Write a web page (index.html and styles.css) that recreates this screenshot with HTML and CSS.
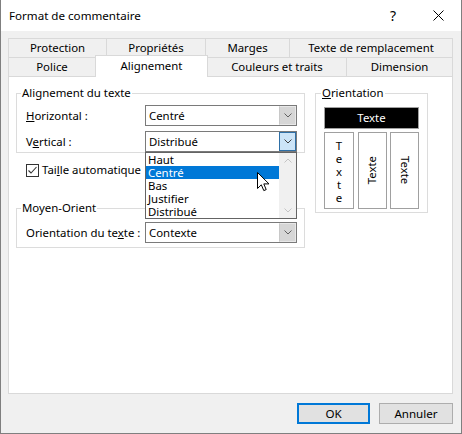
FILE: index.html
```html
<!DOCTYPE html>
<html lang="fr">
<head>
<meta charset="utf-8">
<title>Format de commentaire</title>
<link rel="stylesheet" href="styles.css">
</head>
<body>
<div class="dialog">
  <div class="titlebar">
    <span class="title">Format de commentaire</span>
    <span class="help">?</span>
    <span class="close"><svg width="11" height="11" viewBox="0 0 11 11"><path d="M0.5 0.5L10.5 10.5M10.5 0.5L0.5 10.5" stroke="#000" stroke-width="1"/></svg></span>
  </div>
  <div class="body">
    <div class="tabrow">
      <div class="tab t1">Protection</div>
      <div class="tab t2">Propriétés</div>
      <div class="tab t3">Marges</div>
      <div class="tab t4 last">Texte de remplacement</div>
    </div>
    <div class="tabrow">
      <div class="tab t5">Police</div>
      <div class="tab t6 selected">Alignement</div>
      <div class="tab t7">Couleurs et traits</div>
      <div class="tab t8 last">Dimension</div>
    </div>
    <div class="pane">
      <div class="leftcol">
        <fieldset class="group g1">
          <legend>Alignement du texte</legend>
          <div class="row">
            <span class="label"><u>H</u>orizontal :</span>
            <div class="combo">
              <span class="val">Centré</span>
              <span class="cbtn"><svg width="8" height="5" viewBox="0 0 8 5"><path d="M0.5 0.5L4 4L7.5 0.5" fill="none" stroke="#606060"/></svg></span>
            </div>
          </div>
          <div class="row row2">
            <span class="label">V<u>e</u>rtical :</span>
            <div class="combo-wrap">
              <div class="combo open">
                <span class="val">Distribué</span>
                <span class="cbtn"><svg width="8" height="5" viewBox="0 0 8 5"><path d="M0.5 0.5L4 4L7.5 0.5" fill="none" stroke="#404040"/></svg></span>
              </div>
              <div class="dropdown">
                <div class="items">
                  <div class="item">Haut</div>
                  <div class="item sel">Centré</div>
                  <div class="item">Bas</div>
                  <div class="item">Justifier</div>
                  <div class="item">Distribué</div>
                </div>
                <div class="scroll">
                  <svg width="8" height="5" viewBox="0 0 8 5"><path d="M0.5 4.5L4 1L7.5 4.5" fill="none" stroke="#c4c4c4"/></svg>
                  <svg width="8" height="5" viewBox="0 0 8 5"><path d="M0.5 0.5L4 4L7.5 0.5" fill="none" stroke="#c4c4c4"/></svg>
                </div>
                <svg class="cursor" width="13" height="20" viewBox="0 0 13 20"><path d="M0.5 0.5V16.5L4.3 12.8L6.8 18.6L9.2 17.6L6.8 11.9H12L0.5 0.5Z" fill="#fff" stroke="#000" stroke-width="1" stroke-linejoin="miter"/></svg>
              </div>
            </div>
          </div>
        </fieldset>
        <div class="check">
          <span class="box"><svg width="11" height="11" viewBox="0 0 11 11"><path d="M1.5 5.5L4 8L9.5 2" fill="none" stroke="#333" stroke-width="1.1"/></svg></span>
          <span>Tai<u>l</u>le automatique</span>
        </div>
        <fieldset class="group g2">
          <legend>Moyen-Orient</legend>
          <div class="row">
            <span class="label">Orientation du te<u>x</u>te :</span>
            <div class="combo">
              <span class="val">Contexte</span>
              <span class="cbtn"><svg width="8" height="5" viewBox="0 0 8 5"><path d="M0.5 0.5L4 4L7.5 0.5" fill="none" stroke="#606060"/></svg></span>
            </div>
          </div>
        </fieldset>
      </div>
      <fieldset class="group orient">
        <legend><u>O</u>rientation</legend>
        <div class="orient-inner">
          <div class="horiz">Texte</div>
          <div class="verts">
            <div class="vbox v1"><span class="stack">Texte</span></div>
            <div class="vbox v2"><span class="up">Texte</span></div>
            <div class="vbox v3"><span class="down">Texte</span></div>
          </div>
        </div>
      </fieldset>
    </div>
    <div class="footer">
      <button class="btn ok">OK</button>
      <button class="btn cancel">Annuler</button>
    </div>
  </div>
</div>
</body>
</html>
```

FILE: styles.css
```css
* { box-sizing: border-box; }
html, body { margin: 0; padding: 0; }
body {
  font-family: "Noto Sans", "Open Sans", sans-serif;
  font-size: 11.4px;
  color: #000;
  background: #fff;
}
.dialog {
  width: 462px;
  height: 434px;
  border: 1px solid #7f7f7f;
  border-top: none;
  background: #f0f0f0;
  display: flex;
  flex-direction: column;
}
.titlebar {
  height: 31px;
  background: #fff;
  display: flex;
  align-items: center;
  padding-left: 8px;
  flex: none;
}
.title { flex: 1; line-height: 16px; font-size: 11.6px; }
.help {
  width: 46px;
  text-align: center;
  font-size: 14px;
  line-height: 16px;
}
.close {
  width: 45px;
  display: flex;
  justify-content: center;
  align-items: center;
}
.close svg { display: block; }
.body {
  flex: 1;
  display: flex;
  flex-direction: column;
  padding: 7px 8px 0 7px;
}
.tabrow {
  display: flex;
  height: 19px;
  flex: none;
}
.tab {
  height: 19px;
  border-top: 1px solid #d9d9d9;
  border-left: 1px solid #d9d9d9;
  background: #f0f0f0;
  display: flex;
  align-items: center;
  justify-content: center;
  line-height: 14px;
  white-space: nowrap;
}
.tab.last { border-right: 1px solid #d9d9d9; }
.t1 { width: 98px; }
.t2 { width: 99px; }
.t3 { width: 84px; }
.t4 { width: 164px; }
.t5 { width: 87px; }
.t6 { width: 113px; }
.t7 { width: 138px; }
.t8 { width: 107px; }
.tab.selected {
  background: #fff;
  height: 22px;
  margin-top: -2px;
  border-right: 1px solid #d9d9d9;
  padding-bottom: 2px;
  position: relative;
  z-index: 2;
}
.tab.selected + .tab { border-left: none; }
.pane {
  height: 318px;
  flex: none;
  background: #fff;
  border: 1px solid #d9d9d9;
  display: flex;
  align-items: flex-start;
  gap: 10px;
  padding: 9px 0 0 7px;
}
.leftcol {
  width: 289px;
  display: flex;
  flex-direction: column;
}
.group {
  margin: 0;
  min-width: 0;
  border: 1px solid #dcdcdc;
}
.group legend {
  padding: 0 1px;
  line-height: 14px;
  height: 14px;
}
.g1 { padding: 5px 7px 0 4px; }
.g2 { padding: 7px 7px 4px 4px; margin-top: 24px; }
.row {
  display: flex;
  align-items: center;
  height: 21px;
  margin-left: 5px;
}
.row2 { margin-top: 5px; }
.label { width: 119px; line-height: 14px; white-space: nowrap; }
.combo-wrap { position: relative; width: 152px; height: 21px; }
.combo {
  width: 152px;
  height: 21px;
  border: 1px solid #7a7a7a;
  background: #fff;
  display: flex;
  align-items: stretch;
}
.combo .val {
  flex: 1;
  padding-left: 3px;
  line-height: 19px;
}
.cbtn {
  width: 17px;
  background: #d6d6d6;
  border: 1px solid #e8e8e8;
  border-left-color: #c8c8c8;
  display: flex;
  align-items: center;
  justify-content: center;
}
.cbtn svg { display: block; }
.combo.open .cbtn {
  background: #cce4f7;
  border: 1px solid #2e6fa6;
}
.dropdown {
  position: absolute;
  left: 0;
  top: 100%;
  width: 152px;
  height: 67px;
  border: 1px solid #646464;
  background: #fff;
  display: flex;
  z-index: 5;
}
.items { flex: 1; }
.item {
  height: 13px;
  line-height: 13px;
  padding-left: 2px;
  white-space: nowrap;
}
.item.sel { background: #0078d7; color: #fff; }
.scroll {
  width: 17px;
  background: #f0f0f0;
  display: flex;
  flex-direction: column;
  justify-content: space-between;
  align-items: center;
  padding: 5px 0 5px;
}
.scroll svg { display: block; }
.cursor {
  position: absolute;
  left: 111px;
  top: 19px;
}
.check {
  display: flex;
  align-items: center;
  height: 14px;
  margin-top: 10px;
  padding-left: 10px;
  line-height: 14px;
}
.box {
  width: 13px;
  height: 13px;
  border: 1px solid #333;
  background: #fff;
  margin-right: 3px;
  display: flex;
  align-items: center;
  justify-content: center;
}
.box svg { display: block; }
.orient {
  width: 113px;
  padding: 7px 8px 3px 5px;
}
.orient-inner {
  margin-left: 3px;
  width: 95px;
  display: flex;
  flex-direction: column;
  gap: 3px;
}
.horiz {
  height: 22px;
  background: #000;
  color: #fff;
  border: 1px solid #a0a0a0;
  display: flex;
  align-items: center;
  justify-content: center;
  line-height: 14px;
}
.verts {
  display: flex;
  justify-content: space-between;
  height: 77px;
}
.vbox {
  border: 1px solid #a0a0a0;
  display: flex;
  justify-content: center;
  align-items: center;
}
.v1 { width: 30px; align-items: flex-start; padding-top: 6px; }
.v2, .v3 { width: 29px; }
.stack {
  width: 8px;
  word-break: break-all;
  text-align: center;
  line-height: 13px;
}
.up {
  writing-mode: vertical-rl;
  transform: rotate(180deg);
  line-height: 14px;
}
.down {
  writing-mode: vertical-rl;
  line-height: 14px;
}
.footer {
  display: flex;
  justify-content: flex-end;
  gap: 9px;
  margin-top: 9px;
}
.btn {
  height: 21px;
  margin: 0;
  padding: 0;
  font-family: inherit;
  font-size: 11.6px;
  color: #000;
  background: #e1e1e1;
  border: 1px solid #adadad;
  border-radius: 0;
}
.btn.ok {
  width: 73px;
  border-color: #0078d7;
  box-shadow: inset 0 0 0 1px #0078d7;
}
.btn.cancel { width: 74px; }
```
